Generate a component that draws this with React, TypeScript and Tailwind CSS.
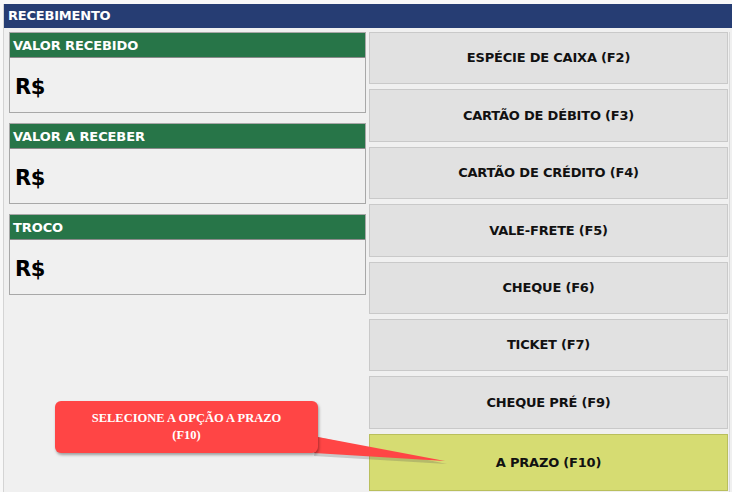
import React from "react";

const cards = ["VALOR RECEBIDO", "VALOR A RECEBER", "TROCO"];

const buttons = [
  "ESPÉCIE DE CAIXA (F2)",
  "CARTÃO DE DÉBITO (F3)",
  "CARTÃO DE CRÉDITO (F4)",
  "VALE-FRETE (F5)",
  "CHEQUE (F6)",
  "TICKET (F7)",
  "CHEQUE PRÉ (F9)",
];

const sans = { fontFamily: '"DejaVu Sans", Tahoma, sans-serif' };

export default function App() {
  return (
    <div className="w-[732px] h-[492px] bg-[#f8f8f8] pt-[4px] pl-[3px] overflow-hidden" style={sans}>
      <div className="relative h-full flex flex-col border-l border-[#d4d4d4] bg-[#f0f0f0]">
        {/* title bar */}
        <div className="h-[24px] shrink-0 flex items-center bg-[#263d73] pl-[4px] text-white font-bold text-[13px] tracking-[-0.2px]">
          RECEBIMENTO
        </div>

        <div className="flex-1 flex pl-[5px] pt-[4px]">
          {/* values */}
          <div className="w-[357px] shrink-0 flex flex-col gap-[10px]">
            {cards.map((c) => (
              <div key={c} className="flex flex-col border border-[#a8a8a8]">
                <div className="h-[25px] flex items-center bg-[#277548] border-b border-[#8a8a8a] pl-[3px] pt-[1px] text-white font-bold text-[13px] tracking-[-0.1px]">
                  {c}
                </div>
                <div className="h-[54px] flex items-center bg-[#f0f0f0] pl-[5px] pt-[5px] text-black font-bold text-[21px] tracking-[-0.5px]">
                  R$
                </div>
              </div>
            ))}
          </div>

          {/* payment options */}
          <div className="shrink-0 ml-[3px] pr-[1px] border-r border-[#d9d9d9]">
            <div className="w-[359px] h-full flex flex-col gap-[5px] pb-[1px]">
              {buttons.map((b) => (
                <div
                  key={b}
                  className="h-[52.4px] shrink-0 flex items-center justify-center bg-[#e1e1e1] border border-[#c9c9c9] text-[#111] font-bold text-[13px] tracking-[-0.2px]"
                >
                  {b}
                </div>
              ))}
              <div className="flex-1 flex items-center justify-center bg-[#d6dc72] border border-[#b9bf5c] text-[#111] font-bold text-[13px] tracking-[-0.2px]">
                A PRAZO (F10)
              </div>
            </div>
          </div>
        </div>

        {/* callout */}
        <svg className="absolute left-[300px] top-[430px]" width="150" height="40" viewBox="0 0 150 40">
          <polygon points="14,3 143,30 10,22" fill="#555" opacity="0.25" />
          <polygon points="14,3 141,27 10,19" fill="#ff4545" />
        </svg>
        <div
          className="absolute left-[51px] top-[397px] w-[263px] h-[52px] rounded-[6px] bg-[#ff4545] shadow-[1px_2px_3px_rgba(0,0,0,0.35)] flex flex-col items-center justify-center text-white font-bold text-[12.5px] leading-[17px]"
          style={{ fontFamily: '"Liberation Serif", "DejaVu Serif", serif' }}
        >
          <span>SELECIONE A OPÇÃO A PRAZO</span>
          <span>(F10)</span>
        </div>
      </div>
    </div>
  );
}
